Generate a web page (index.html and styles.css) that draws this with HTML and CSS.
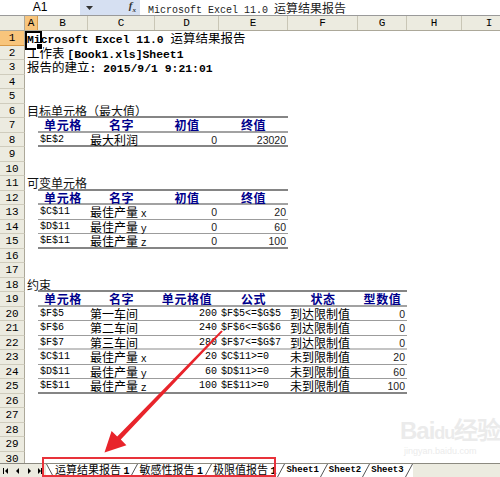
FILE: index.html
```html
<!DOCTYPE html>
<html lang="zh-CN">
<head>
<meta charset="utf-8">
<title>运算结果报告</title>
<link rel="stylesheet" href="styles.css">
</head>
<body>
<div class="fbar">
  <div class="namebox">A1</div>
  <div class="fstrip">
    <svg class="dd" width="7" height="4" viewBox="0 0 7 4"><path d="M0 0H7L3.5 4Z" fill="#333"/></svg>
    <span class="fx">f<sub>x</sub></span>
  </div>
  <div class="fcontent"><span class="m">Microsoft Excel 11.0 </span>运算结果报告</div>
</div>

<div class="colhead">
  <div class="corner"></div>
  <div class="ch sel">A</div><div class="ch">B</div><div class="ch">C</div><div class="ch">D</div><div class="ch">E</div><div class="ch">F</div><div class="ch">G</div><div class="ch">H</div><div class="ch">I</div>
</div>

<div class="sheet">
  <div class="row"><div class="rh sel">1</div><div class="c big wide a1"><span class="m b">Microsoft Excel 11.0 </span>运算结果报告</div></div>
  <div class="row"><div class="rh">2</div><div class="c big wide">工作表 <span class="m b">[Book1.xls]Sheet1</span></div></div>
  <div class="row"><div class="rh">3</div><div class="c big wide">报告的建立<span class="m b">: 2015/9/1 9:21:01</span></div></div>
  <div class="row"><div class="rh">4</div></div>
  <div class="row"><div class="rh">5</div></div>
  <div class="row"><div class="rh">6</div><div class="c title wide">目标单元格（最大值）</div><div class="t4 bt"></div></div>
  <div class="row"><div class="rh">7</div><div></div><div class="t4 bh"><div class="h">单元格</div><div class="h">名字</div><div class="h">初值</div><div class="h">终值</div></div></div>
  <div class="row"><div class="rh">8</div><div></div><div class="t4 bt"><div class="c m">$E$2</div><div class="c">最大利润</div><div class="c n">0</div><div class="c n">23020</div></div></div>
  <div class="row"><div class="rh">9</div></div>
  <div class="row"><div class="rh">10</div></div>
  <div class="row"><div class="rh">11</div><div class="c title wide">可变单元格</div><div class="t4 bt"></div></div>
  <div class="row"><div class="rh">12</div><div></div><div class="t4 bh"><div class="h">单元格</div><div class="h">名字</div><div class="h">初值</div><div class="h">终值</div></div></div>
  <div class="row"><div class="rh">13</div><div></div><div class="t4 bn"><div class="c m">$C$11</div><div class="c">最佳产量 <span class="m">x</span></div><div class="c n">0</div><div class="c n">20</div></div></div>
  <div class="row"><div class="rh">14</div><div></div><div class="t4 bn"><div class="c m">$D$11</div><div class="c">最佳产量 <span class="m">y</span></div><div class="c n">0</div><div class="c n">60</div></div></div>
  <div class="row"><div class="rh">15</div><div></div><div class="t4 bt"><div class="c m">$E$11</div><div class="c">最佳产量 <span class="m">z</span></div><div class="c n">0</div><div class="c n">100</div></div></div>
  <div class="row"><div class="rh">16</div></div>
  <div class="row"><div class="rh">17</div></div>
  <div class="row"><div class="rh">18</div><div class="c title wide">约束</div><div class="t6 bt"></div></div>
  <div class="row"><div class="rh">19</div><div></div><div class="t6 bh"><div class="h">单元格</div><div class="h">名字</div><div class="h">单元格值</div><div class="h">公式</div><div class="h">状态</div><div class="h">型数值</div></div></div>
  <div class="row"><div class="rh">20</div><div></div><div class="t6 bn"><div class="c m">$F$5</div><div class="c">第一车间</div><div class="c m r">200</div><div class="c m">$F$5&lt;=$G$5</div><div class="c">到达限制值</div><div class="c n">0</div></div></div>
  <div class="row"><div class="rh">21</div><div></div><div class="t6 bn"><div class="c m">$F$6</div><div class="c">第二车间</div><div class="c m r">240</div><div class="c m">$F$6&lt;=$G$6</div><div class="c">到达限制值</div><div class="c n">0</div></div></div>
  <div class="row"><div class="rh">22</div><div></div><div class="t6 bl"><div class="c m">$F$7</div><div class="c">第三车间</div><div class="c m r">280</div><div class="c m">$F$7&lt;=$G$7</div><div class="c">到达限制值</div><div class="c n">0</div></div></div>
  <div class="row"><div class="rh">23</div><div></div><div class="t6 bn"><div class="c m">$C$11</div><div class="c">最佳产量 <span class="m">x</span></div><div class="c m r">20</div><div class="c m">$C$11&gt;=0</div><div class="c">未到限制值</div><div class="c n">20</div></div></div>
  <div class="row"><div class="rh">24</div><div></div><div class="t6 bn"><div class="c m">$D$11</div><div class="c">最佳产量 <span class="m">y</span></div><div class="c m r">60</div><div class="c m">$D$11&gt;=0</div><div class="c">未到限制值</div><div class="c n">60</div></div></div>
  <div class="row"><div class="rh">25</div><div></div><div class="t6 bt"><div class="c m">$E$11</div><div class="c">最佳产量 <span class="m">z</span></div><div class="c m r">100</div><div class="c m">$E$11&gt;=0</div><div class="c">未到限制值</div><div class="c n">100</div></div></div>
  <div class="row"><div class="rh">26</div></div>
  <div class="row"><div class="rh">27</div></div>
  <div class="row"><div class="rh">28</div></div>
  <div class="row"><div class="rh">29</div></div>
  <div class="row last"><div class="rh">30</div></div>
</div>

<div class="tabs">
  <div class="nav">
    <svg width="44" height="8" viewBox="0 0 44 8">
      <rect x="3" y="1" width="1" height="6" fill="#000"/><path d="M8 1V7L5 4Z" fill="#000"/>
      <path d="M19 1V7L16 4Z" fill="#000"/>
      <path d="M28 1V7L31 4Z" fill="#000"/>
      <path d="M38 1V7L41 4Z" fill="#000"/><rect x="41" y="1" width="1" height="6" fill="#000"/>
    </svg>
  </div>
  <div class="tabstrip">
    <svg class="sep" width="8" height="13" viewBox="0 0 8 13"><path d="M0.5 0L7.5 13" stroke="#555" fill="none"/></svg>
    <span class="tab active">运算结果报告 <span class="m">1</span></span>
    <svg class="sep" width="8" height="13" viewBox="0 0 8 13"><path d="M7.5 0L0.5 13" stroke="#555" fill="none"/></svg>
    <span class="tab">敏感性报告 <span class="m">1</span></span>
    <svg class="sep" width="8" height="13" viewBox="0 0 8 13"><path d="M7.5 0L0.5 13" stroke="#555" fill="none"/></svg>
    <span class="tab">极限值报告 <span class="m">1</span></span>
    <svg class="sep" width="8" height="13" viewBox="0 0 8 13"><path d="M7.5 0L0.5 13" stroke="#555" fill="none"/></svg>
    <span class="tab en">Sheet1</span>
    <svg class="sep" width="8" height="13" viewBox="0 0 8 13"><path d="M7.5 0L0.5 13" stroke="#555" fill="none"/></svg>
    <span class="tab en">Sheet2</span>
    <svg class="sep" width="8" height="13" viewBox="0 0 8 13"><path d="M7.5 0L0.5 13" stroke="#555" fill="none"/></svg>
    <span class="tab en">Sheet3</span>
    <svg class="sep" width="8" height="13" viewBox="0 0 8 13"><path d="M7.5 0L0.5 13" stroke="#555" fill="none"/></svg>
  </div>
</div>

<div class="watermark">
  <div class="wm1">Bai<span class="paw">du</span>经验</div>
  <div class="wm2">jingyan.baidu.com</div>
</div>

<div class="redbox"></div>
<svg class="arrow" width="500" height="477" viewBox="0 0 500 477">
  <polygon points="222.8,331.6 120.8,439.6 126.4,445.2 104.5,452.5 111.6,430.9 117.2,436.4 221.2,330.4" fill="#e8242b"/>
</svg>
</body>
</html>
```

FILE: styles.css
```css
* { box-sizing: border-box; margin: 0; padding: 0; }

body {
  margin: 0;
  width: 500px;
  height: 477px;
  overflow: hidden;
  position: relative;
  background: #fff;
  font-family: "Noto Sans CJK SC", sans-serif;
  font-size: 12px;
  color: #000;
}

.m { font-family: "Liberation Mono", "Noto Sans CJK SC", monospace; font-size: 10px; }
.b { font-weight: bold; }

/* formula bar */
.fbar {
  display: flex;
  height: 16px;
  border-bottom: 1px solid #9a9a9a;
}
.namebox {
  width: 80px;
  text-align: center;
  font: 12px/15px "Liberation Sans", sans-serif;
  background: #fff;
}
.fstrip {
  width: 60px;
  background: #d6e0f2;
  display: flex;
  align-items: center;
  justify-content: space-between;
  padding: 0 4px 0 6px;
}
.fx {
  font: italic bold 11px/14px "Liberation Serif", serif;
  color: #333;
}
.fx sub { font-size: 7px; }
.fcontent {
  flex: 1;
  padding-left: 8px;
  line-height: 15px;
  white-space: nowrap;
  color: #222;
}

/* column headers */
.colhead {
  display: grid;
  grid-template-columns: 25px 13px 50px 67px 64px 69px 70px 49px 55px 55px;
  height: 15px;
  background: #ecebe0;
  border-bottom: 1px solid #aca899;
}
.corner { border-right: 1px solid #aca899; }
.ch {
  border-right: 1px solid #c9c6b6;
  text-align: center;
  font: 11px/14px "Liberation Mono", monospace;
}
.ch.sel { background: #f8c57c; border-right-color: #d89a48; }

/* sheet */
.sheet {
  height: 432px;
}
.row {
  display: grid;
  grid-template-columns: 25px 13px 50px 67px 64px 69px 70px 49px 55px 55px;
  grid-template-rows: 14.5px;
  height: 14.5px;
}
.row.last {
  grid-template-rows: 11.5px;
  height: 11.5px;
}
.row.last .rh { border-bottom: 0; }
.rh {
  grid-column: 1;
  grid-row: 1;
  background: #ecebe0;
  border-right: 1px solid #aca899;
  border-bottom: 1px solid #cfccbd;
  text-align: center;
  font: 11px/14px "Liberation Mono", monospace;
}
.rh.sel { background: #f8c57c; border-bottom-color: #d89a48; }

.c {
  white-space: nowrap;
  padding: 0 2px;
  line-height: 14px;
  height: 14px;
}
.wide { grid-column: 2 / -1; grid-row: 1; }
.big { font-size: 12.5px; }
.big .m { font-size: 11.4px; }
.title { font-size: 12px; color: #111; }
.a1 { position: relative; }
.a1::before {
  content: "";
  position: absolute;
  left: 0;
  top: 0;
  width: 13px;
  height: 15px;
  border: 2px solid #000;
}
.a1::after {
  content: "";
  position: absolute;
  left: 11px;
  top: 12px;
  width: 5px;
  height: 5px;
  background: #000;
  border: 1px solid #fff;
}

.t4, .t6 { display: grid; grid-row: 1; }
.t4 { grid-column: 3 / span 4; grid-template-columns: 50px 67px 64px 69px; }
.t6 { grid-column: 3 / span 6; grid-template-columns: 50px 67px 64px 69px 70px 49px; }
.bt { border-bottom: 2px solid #858585; }
.bh { border-bottom: 2px solid #a2a2a2; }
.bn { border-bottom: 1px solid #9c9c9c; }
.bl { border-bottom: 2px solid #c4c4c4; }

.h {
  text-align: center;
  color: #00008b;
  font-weight: bold;
  font-size: 12px;
  letter-spacing: 0.6px;
  line-height: 13px;
  height: 13px;
  white-space: nowrap;
}
.r { text-align: right; }
.n {
  text-align: right;
  font-family: "Liberation Sans", sans-serif;
  font-size: 10.5px;
  color: #222;
}

/* sheet tabs */
.tabs {
  display: flex;
  align-items: center;
  height: 14px;
  background: #ecebe0;
  border-top: 1px solid #8c8a80;
}
.nav { width: 46px; display: flex; align-items: center; }
.tabstrip {
  display: flex;
  align-items: center;
  height: 13px;
  background: #fff;
}
.sep { display: block; }
.tab {
  font-size: 11px;
  line-height: 13px;
  white-space: nowrap;
  padding: 0 1px;
}
.tab .m { font-size: 10px; font-weight: bold; }
.tab.en {
  font-family: "Liberation Mono", monospace;
  font-size: 9px;
  font-weight: bold;
  padding: 0 1px;
}

/* overlays */
.watermark {
  position: absolute;
  left: 400px;
  top: 418px;
  color: #ebebeb;
  pointer-events: none;
}
.wm1 {
  font: bold 24px/26px "Liberation Sans", sans-serif;
  white-space: nowrap;
  letter-spacing: -1px;
}
.wm1 .paw { font-size: 18px; }
.wm2 {
  font: 9px/11px "Liberation Sans", sans-serif;
  margin-left: 4px;
}
.redbox {
  position: absolute;
  left: 42px;
  top: 457px;
  width: 234px;
  height: 20px;
  border: 2px solid #e8323a;
}
.arrow {
  position: absolute;
  left: 0;
  top: 0;
  pointer-events: none;
}
```
